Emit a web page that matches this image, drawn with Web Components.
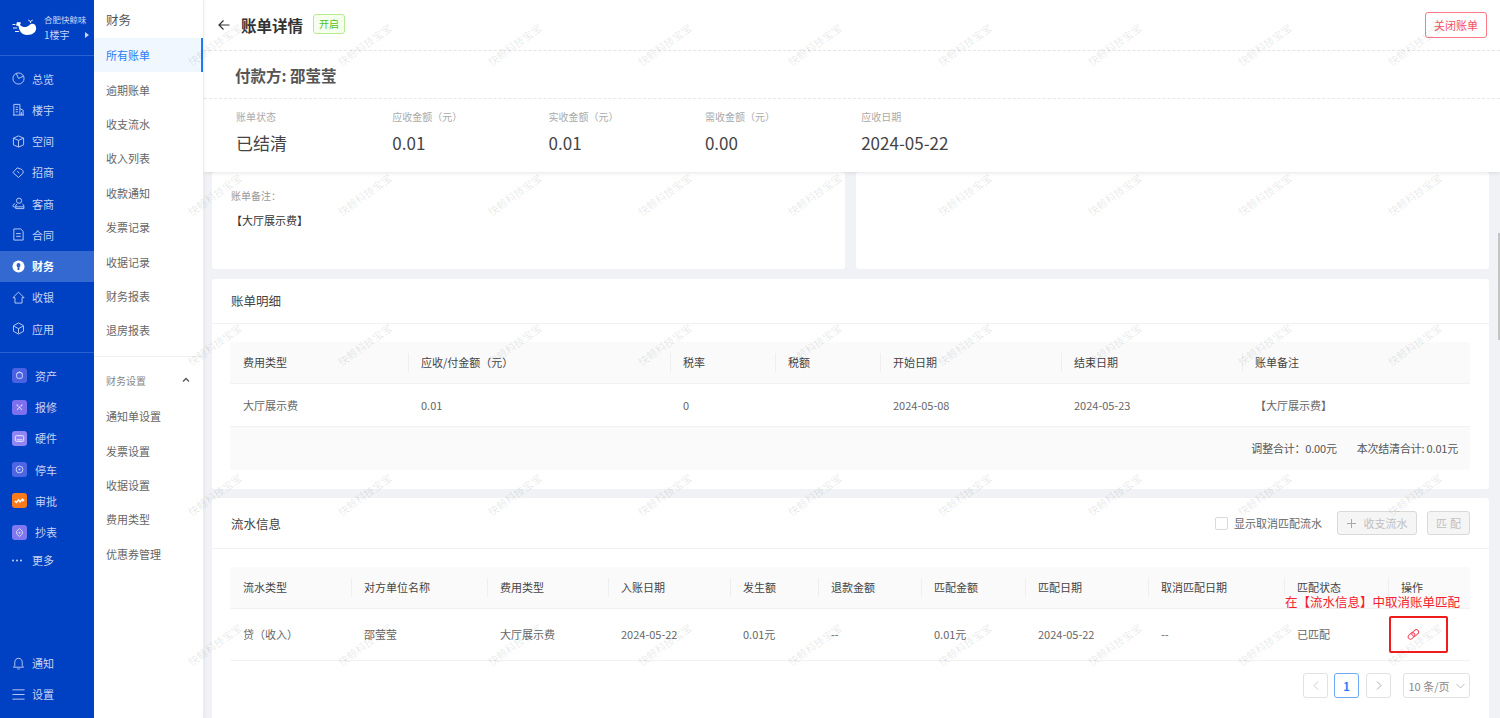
<!DOCTYPE html>
<html lang="zh">
<head>
<meta charset="utf-8">
<title>账单详情</title>
<style>
  html, body { margin: 0; height: 718px; overflow: hidden; }
  body {
    position: relative;
    font-family: "Noto Sans CJK SC", "Noto Sans", sans-serif;
    font-size: 11px;
    color: #666;
    background: #f0f2f5;
  }
  .shell { display: flex; height: 718px; }
  .main { flex: 1; min-width: 0; display: flex; flex-direction: column; overflow: hidden; }
  .content { display: flex; flex-direction: column; gap: 9.5px; padding: 0 11px 0 8px; }
  .two { display: flex; gap: 11px; }
  .two panel-card { flex: 1; height: 97px; }
  .note-label { font-size: 10px; color: #999; padding: 16px 0 0 19px; line-height: 16px; }
  .note-text { color: #333; padding: 8px 0 0 19px; line-height: 16px; }
  .bill-cols { --cols: 178px 262px 105px 105px 181px 181px 1fr; padding: 18px 19px 19px 18px; }
  .flow-cols { --cols: 121px 136px 121px 122px 88px 103px 104px 123px 136px 104px 1fr; padding: 18px 19px 0 18px; }
  .sum { display: flex; justify-content: flex-end; gap: 20px; align-items: center; height: 43px; padding-right: 12px; background: #fafafa; color: #555; letter-spacing: -.2px; }
</style>
</head>
<body>
<div class="shell">
  <side-rail>
    <rail-brand slot="brand"></rail-brand>
    <rail-item slot="top"><rail-icon name="pie"></rail-icon>总览</rail-item>
    <rail-item slot="top"><rail-icon name="building"></rail-icon>楼宇</rail-item>
    <rail-item slot="top"><rail-icon name="cube"></rail-icon>空间</rail-item>
    <rail-item slot="top"><rail-icon name="tag"></rail-icon>招商</rail-item>
    <rail-item slot="top"><rail-icon name="user"></rail-icon>客商</rail-item>
    <rail-item slot="top"><rail-icon name="doc"></rail-icon>合同</rail-item>
    <rail-item slot="top" active><rail-icon name="coin"></rail-icon>财务</rail-item>
    <rail-item slot="top"><rail-icon name="home"></rail-icon>收银</rail-item>
    <rail-item slot="top"><rail-icon name="hex"></rail-icon>应用</rail-item>
    <rail-item slot="apps" tile><rail-icon name="t-box" tile="#4a62e2"></rail-icon>资产</rail-item>
    <rail-item slot="apps" tile><rail-icon name="t-cross" tile="#7d70ee"></rail-icon>报修</rail-item>
    <rail-item slot="apps" tile><rail-icon name="t-card" tile="#8f86f3"></rail-icon>硬件</rail-item>
    <rail-item slot="apps" tile><rail-icon name="t-ring" tile="#4f66e4"></rail-icon>停车</rail-item>
    <rail-item slot="apps" tile><rail-icon name="t-wave" tile="#fb7a1c"></rail-icon>审批</rail-item>
    <rail-item slot="apps" tile><rail-icon name="t-drop" tile="#7f78ee"></rail-icon>抄表</rail-item>
    <rail-item slot="more" short><rail-icon name="dots"></rail-icon>更多</rail-item>
    <rail-item slot="bottom"><rail-icon name="bell"></rail-icon>通知</rail-item>
    <rail-item slot="bottom"><rail-icon name="menu"></rail-icon>设置</rail-item>
  </side-rail>

  <sub-nav>
    <span slot="title">财务</span>
    <sub-item slot="main" active>所有账单</sub-item>
    <sub-item slot="main">逾期账单</sub-item>
    <sub-item slot="main">收支流水</sub-item>
    <sub-item slot="main">收入列表</sub-item>
    <sub-item slot="main">收款通知</sub-item>
    <sub-item slot="main">发票记录</sub-item>
    <sub-item slot="main">收据记录</sub-item>
    <sub-item slot="main">财务报表</sub-item>
    <sub-item slot="main">退房报表</sub-item>
    <span slot="group">财务设置</span>
    <sub-item slot="settings">通知单设置</sub-item>
    <sub-item slot="settings">发票设置</sub-item>
    <sub-item slot="settings">收据设置</sub-item>
    <sub-item slot="settings">费用类型</sub-item>
    <sub-item slot="settings">优惠券管理</sub-item>
  </sub-nav>

  <div class="main">
    <bill-header>
      <span slot="title">账单详情</span>
      <span slot="tag">开启</span>
      <span slot="action">关闭账单</span>
      <span slot="payer">付款方: 邵莹莹</span>
      <stat-item slot="stats"><span slot="label">账单状态</span>已结清</stat-item>
      <stat-item slot="stats"><span slot="label">应收金额（元）</span>0.01</stat-item>
      <stat-item slot="stats"><span slot="label">实收金额（元）</span>0.01</stat-item>
      <stat-item slot="stats"><span slot="label">需收金额（元）</span>0.00</stat-item>
      <stat-item slot="stats"><span slot="label">应收日期</span>2024-05-22</stat-item>
    </bill-header>

    <div class="content">
      <div class="two">
        <panel-card>
          <div class="note-label">账单备注：</div>
          <div class="note-text">【大厅展示费】</div>
        </panel-card>
        <panel-card></panel-card>
      </div>

      <panel-card heading="账单明细">
        <div class="bill-cols">
          <table-row head>
            <row-cell head first>费用类型</row-cell><row-cell head>应收/付金额（元）</row-cell><row-cell head>税率</row-cell><row-cell head>税额</row-cell><row-cell head>开始日期</row-cell><row-cell head>结束日期</row-cell><row-cell head>账单备注</row-cell>
          </table-row>
          <table-row style="--row-h:41px;padding-top:1px">
            <row-cell>大厅展示费</row-cell><row-cell>0.01</row-cell><row-cell>0</row-cell><row-cell></row-cell><row-cell>2024-05-08</row-cell><row-cell>2024-05-23</row-cell><row-cell>【大厅展示费】</row-cell>
          </table-row>
          <div class="sum"><span>调整合计：0.00元</span><span>本次结清合计: 0.01元</span></div>
        </div>
      </panel-card>

      <panel-card heading="流水信息" tall>
        <flow-tools slot="tools"></flow-tools>
        <div class="flow-cols">
          <table-row head>
            <row-cell head first>流水类型</row-cell><row-cell head>对方单位名称</row-cell><row-cell head>费用类型</row-cell><row-cell head>入账日期</row-cell><row-cell head>发生额</row-cell><row-cell head>退款金额</row-cell><row-cell head>匹配金额</row-cell><row-cell head>匹配日期</row-cell><row-cell head>取消匹配日期</row-cell><row-cell head>匹配状态</row-cell><row-cell head>操作</row-cell>
          </table-row>
          <table-row style="--row-h:51px">
            <row-cell>贷（收入）</row-cell><row-cell>邵莹莹</row-cell><row-cell>大厅展示费</row-cell><row-cell>2024-05-22</row-cell><row-cell>0.01元</row-cell><row-cell>--</row-cell><row-cell>0.01元</row-cell><row-cell>2024-05-22</row-cell><row-cell>--</row-cell><row-cell>已匹配</row-cell>
            <row-cell><svg width="13" height="13" viewBox="0 0 13 13" fill="none" stroke="#f0445a" stroke-width="1" style="display:block;margin-left:6px"><rect x="0.8" y="5.6" width="7.4" height="4.6" rx="2.3" transform="rotate(-45 4.5 7.9)"/><rect x="4.6" y="2.6" width="7.4" height="4.6" rx="2.3" transform="rotate(-45 8.3 4.9)"/></svg></row-cell>
          </table-row>
          <pager-bar></pager-bar>
        </div>
      </panel-card>
    </div>
  </div>
</div>

<water-mark></water-mark>
<match-note>在【流水信息】中取消账单匹配</match-note>
<scroll-thumb></scroll-thumb>

<script>
  // small helper, every element here is just a template + open shadow root
  function defineEl(name, css, html) {
    const tpl = document.createElement("template");
    tpl.innerHTML = `<style>${css}</style>${html}`;
    customElements.define(name, class extends HTMLElement {
      constructor() {
        super();
        this.attachShadow({ mode: "open" }).appendChild(tpl.content.cloneNode(true));
      }
    });
  }

  const ICONS = {
    pie: '<circle cx="7" cy="7" r="6"/><path d="M7 7L12.4 4.4M7 7L4.6 1.5"/>',
    building: '<path d="M2 13V1.5h6.5V13M8.5 6l3.5 1.8V13M1 13h12M4 4.5h2.4M4 7h2.4M4 9.5h2.4M10.2 10v3"/>',
    cube: '<path d="M7 1l5.5 2.4v7.2L7 13l-5.5-2.4V3.4zM1.5 3.4L7 5.8l5.5-2.4M7 5.8V13"/>',
    tag: '<path d="M5.6 2L1 7l6 5.4 4.8-4.6M5.6 2l3.6 1.2M9.2 3.2c2.4.6 3.4 2.8 2.6 4.6M5.8 5.6l2 2.2"/>',
    user: '<circle cx="7.6" cy="4" r="2.8"/><path d="M3.4 7.2C2 7.6 1 8.4 1 9.6c0 .8.6 1.2 1.4 1.2h1M5.4 7.6c-1 .6-1.4 1.4-1.4 2.2v2.7h8.8V9.8c0-1-.6-1.8-1.6-2.2M4 10.6h8.8"/>',
    doc: '<path d="M2 1h7.4L12 3.6V13H2zM4.5 6h5M4.5 9h5"/>',
    home: '<path d="M7 1.2L1 7.2h2.2V13h7.6V7.2H13z"/>',
    hex: '<path d="M7 1l5.4 3v6L7 13l-5.4-3V4zM2.4 4.6L7 7.2l4.6-2.6M7 7.2V12"/>',
    bell: '<path d="M7 1.4c-2.6 0-4 2-4 4.4v3.4L1.6 11h10.8L11 9.2V5.8c0-2.4-1.4-4.4-4-4.4zM5.6 12.6c.8.6 2 .6 2.8 0"/>',
    menu: '<path d="M.5 2h13M.5 7h13M.5 12h13"/>',
  };
  const TILES = {
    "t-box": '<rect x="5" y="5" width="6" height="6" rx="1.5" fill="none" stroke="#cfd6fa"/><path d="M5 6l3-2 3 2" fill="none" stroke="#cfd6fa"/>',
    "t-cross": '<path d="M5 5l6 6M11 5l-6 6" stroke="#e2defc" stroke-width="1.2" stroke-dasharray="2 .8"/>',
    "t-card": '<rect x="3.5" y="5" width="9" height="6" rx="1" fill="none" stroke="#f0eefe"/><path d="M5 9.4h6" stroke="#f0eefe"/>',
    "t-ring": '<circle cx="8" cy="8" r="3.6" fill="none" stroke="#cfd6fa"/><circle cx="8" cy="8" r="1.1" fill="#cfd6fa"/>',
    "t-wave": '<path d="M3 8.5l1.6 1.6L7 7.4l1.6 2L11 6.8l.6 1.4L13 6.8" fill="none" stroke="#fff" stroke-width="1.5"/>',
    "t-drop": '<path d="M8 3.8L11 6.6v3L8 12.2 5 9.6v-3z" fill="none" stroke="#dcd9fb"/><circle cx="8" cy="8.2" r="1" fill="#dcd9fb"/>',
  };

  class RailIcon extends HTMLElement {
    constructor() {
      super();
      this.attachShadow({ mode: "open" });
    }
    connectedCallback() {
      const name = this.getAttribute("name");
      const tile = this.getAttribute("tile");
      let svg;
      if (tile) {
        svg = `<svg width="15" height="15" viewBox="0 0 16 16" style="background:${tile};border-radius:3px">${TILES[name]}</svg>`;
      } else if (name === "coin") {
        svg = `<svg width="13" height="13" viewBox="0 0 14 14"><circle cx="7" cy="7" r="6.5" fill="#fff"/><rect x="5" y="3.2" width="4" height="4.6" rx="2" fill="#2f62cc"/><rect x="6" y="7.6" width="2" height="3.2" fill="#2f62cc"/></svg>`;
      } else if (name === "dots") {
        svg = `<svg width="10" height="13" viewBox="0 0 10 13" fill="#c6d3f2"><circle cx="1" cy="6.5" r="1"/><circle cx="5" cy="6.5" r="1"/><circle cx="9" cy="6.5" r="1"/></svg>`;
      } else {
        svg = `<svg width="13" height="13" viewBox="0 0 14 14" fill="none" stroke="#c2cff0" stroke-width="1" stroke-linejoin="round">${ICONS[name]}</svg>`;
      }
      this.shadowRoot.innerHTML = `<style>:host{display:inline-flex;flex:none}svg{display:block}</style>${svg}`;
    }
  }
  customElements.define("rail-icon", RailIcon);

  defineEl("side-rail", `
    :host { display: flex; flex-direction: column; flex: none; width: 94px; height: 718px; background: #0041c4; position: relative; z-index: 3; }
    .brand { height: 55px; border-bottom: 1px solid #2a60cf; }
    .top { padding-top: 7px; padding-bottom: 8px; border-bottom: 1px solid #2a60cf; }
    .apps { padding-top: 7px; }
    .bottom { margin-top: auto; padding-bottom: 8px; }
  `, `
    <div class="brand"><slot name="brand"></slot></div>
    <div class="top"><slot name="top"></slot></div>
    <div class="apps"><slot name="apps"></slot><slot name="more"></slot></div>
    <div class="bottom"><slot name="bottom"></slot></div>
  `);

  defineEl("rail-brand", `
    :host { display: flex; align-items: center; height: 100%; padding-left: 12px; gap: 7px; color: #c8d5f5; font-size: 10px; }
    .names { display: flex; flex-direction: column; gap: 2px; line-height: 13px; margin-top: -1px; }
    .first { font-size: 8.5px; }
    .second { display: flex; justify-content: space-between; align-items: center; width: 45px; }
    i { width: 0; height: 0; border-left: 4px solid #c8d5f5; border-top: 3.5px solid transparent; border-bottom: 3.5px solid transparent; }
    svg { display: block; }
  `, `
    <svg width="25" height="17" viewBox="0 0 25 17" fill="#fff">
      <path d="M5 3l4 .6L8 6c3 3 7 2.4 9.2 .2C19.4 4 23.2 4 24 8c.9 4.800-3 8-9 8-5 0-8-4-8.500-9L4 6.500z"/>
      <path d="M18.500 3.600c0-1.300-1-2.300-2.200-2.400M18.500 3.600c0-1.300 1-2.300 2.200-2.400" fill="none" stroke="#fff"/>
      <path d="M.5 5.500h3M1 9h4.200M3 12.500h4" stroke="#fff" stroke-width=".9"/>
    </svg>
    <div class="names"><span class="first">合肥快鲸味</span><span class="second"><span>1楼宇</span><i></i></span></div>
  `);

  defineEl("rail-item", `
    :host { display: flex; align-items: center; gap: 7px; height: 31.25px; padding-left: 12px; color: #c6d3f2; font-size: 11px; }
    :host([tile]) { gap: 8px; }
    :host([short]) { height: 25px; gap: 10px; }
    :host([active]) { background: #3369d0; color: #fff; font-weight: 700; }
  `, `<slot></slot>`);

  defineEl("sub-nav", `
    :host { display: block; flex: none; box-sizing: border-box; width: 110px; height: 718px; background: #fff; position: relative; z-index: 2; border-right: 1px solid #ececf0; box-shadow: 1px 0 3px rgba(0,0,0,.04); color: #666; font-size: 11px; }
    .title { height: 38px; line-height: 39px; padding-left: 12px; font-size: 12.5px; color: #555; }
    .main { padding-bottom: 8.5px; border-bottom: 1px solid #f0f0f0; }
    .group { display: flex; justify-content: space-between; align-items: center; box-sizing: border-box; height: 48px; padding: 0 13px 2px 12px; font-size: 10px; color: #888; }
    svg { display: block; }
    .settings { margin-top: -6px; }
  `, `
    <div class="title"><slot name="title"></slot></div>
    <div class="main"><slot name="main"></slot></div>
    <div class="group"><slot name="group"></slot>
      <svg width="8" height="6" viewBox="0 0 8 6" fill="none" stroke="#555" stroke-width="1.3"><path d="M1 4.5l3-3 3 3"/></svg></div>
    <div class="settings"><slot name="settings"></slot></div>
  `);

  defineEl("sub-item", `
    :host { display: flex; align-items: center; box-sizing: border-box; height: 34.4px; padding-left: 12px; }
    :host([active]) { background: #f0f7ff; color: #2b7cf6; border-right: 2px solid #1e7bf0; }
  `, `<slot></slot>`);

  defineEl("bill-header", `
    :host { display: block; flex: none; height: 172px; box-sizing: border-box; background: #fff; position: relative; z-index: 1; box-shadow: 0 1px 4px rgba(0,0,0,.1); }
    .bar { display: flex; align-items: center; height: 51px; box-sizing: border-box; padding: 0 13px 0 14px; border-bottom: 1px dashed #e4e4e4; }
    .title { margin-left: 11px; font-size: 15.5px; font-weight: 700; color: #333; }
    .tag { margin-left: 10px; margin-top: -3px; padding: 0 5px; height: 18px; line-height: 18px; border: 1px solid #b7eb8f; border-radius: 3px; background: #f6ffed; color: #52c41a; font-size: 10px; }
    .close { margin-left: auto; margin-top: -1px; width: 60px; height: 24px; line-height: 24px; text-align: center; border: 1px solid #ff7a85; border-radius: 3px; color: #f5505c; font-size: 11px; }
    .payer { height: 48px; line-height: 48px; box-sizing: border-box; padding-left: 31px; font-size: 15.5px; font-weight: 700; color: #555; border-bottom: 1px dashed #e8e8e8; }
    .stats { display: flex; padding: 11px 0 0 32px; }
    svg { display: block; }
  `, `
    <div class="bar">
      <svg width="12" height="12" viewBox="0 0 12 12" fill="none" stroke="#333" stroke-width="1.2"><path d="M11.500 6H1M5.500 1.500L1 6l4.500 4.500"/></svg>
      <span class="title"><slot name="title"></slot></span>
      <span class="tag"><slot name="tag"></slot></span>
      <span class="close"><slot name="action"></slot></span>
    </div>
    <div class="payer"><slot name="payer"></slot></div>
    <div class="stats"><slot name="stats"></slot></div>
  `);

  defineEl("stat-item", `
    :host { display: block; width: 156.3px; color: #444; font-size: 17px; line-height: 24px; }
    .label { display: block; font-size: 10px; line-height: 14px; color: #aaa; margin-bottom: 7px; }
  `, `<span class="label"><slot name="label"></slot></span><slot></slot>`);

  class PanelCard extends HTMLElement {
    constructor() {
      super();
      this.attachShadow({ mode: "open" });
    }
    connectedCallback() {
      const heading = this.getAttribute("heading");
      const tall = this.hasAttribute("tall");
      const head = heading
        ? `<div class="head" style="height:${tall ? 51 : 45}px"><span>${heading}</span><slot name="tools"></slot></div>`
        : "";
      this.shadowRoot.innerHTML = `
        <style>
          :host { display: block; background: #fff; border-radius: 3px; ${tall ? "min-height: 240px;" : ""} }
          .head { display: flex; align-items: center; justify-content: space-between; box-sizing: border-box; padding: 0 19px; border-bottom: 1px solid #f2f2f2; font-size: 12.5px; color: #444; }
        </style>
        ${head}<slot></slot>`;
    }
  }
  customElements.define("panel-card", PanelCard);

  defineEl("table-row", `
    :host { display: grid; grid-template-columns: var(--cols); height: var(--row-h, 42px); border-bottom: 1px solid #f2f2f2; color: #666; }
    :host([head]) { background: #fafafa; border-radius: 3px 3px 0 0; --row-h: 41px; color: #444; }
  `, `<slot></slot>`);

  defineEl("row-cell", `
    :host { display: flex; align-items: center; padding-left: 13px; position: relative; white-space: nowrap; font-size: 11px; line-height: 13px; }
    :host([head]:not([first]))::before { content: ""; position: absolute; left: 0; top: 11px; height: 19px; width: 1px; background: #efefef; }
  `, `<slot></slot>`);

  defineEl("flow-tools", `
    :host { display: flex; align-items: center; font-size: 11px; color: #666; }
    .check { width: 11px; height: 11px; border: 1px solid #d9d9d9; border-radius: 2px; margin-right: 6px; margin-top: 1px; }
    .btn { display: flex; align-items: center; justify-content: center; height: 24px; box-sizing: border-box; border: 1px solid #d9d9d9; border-radius: 3px; background: #f5f5f5; color: #bfbfbf; }
    .add { width: 80px; margin-left: 15px; gap: 8px; }
    .match { width: 43px; margin-left: 10px; letter-spacing: 3px; padding-left: 3px; }
    svg { display: block; }
  `, `
    <span class="check"></span><span>显示取消匹配流水</span>
    <span class="btn add"><svg width="9" height="9" viewBox="0 0 9 9" stroke="#a8a8a8"><path d="M4.500 0v9M0 4.500h9"/></svg>收支流水</span>
    <span class="btn match">匹配</span>
  `);

  defineEl("pager-bar", `
    :host { display: flex; justify-content: flex-end; align-items: center; gap: 6px; padding-top: 12px; font-size: 11px; color: #888; }
    .box { display: flex; align-items: center; justify-content: center; box-sizing: border-box; width: 25px; height: 25px; border: 1px solid #e2e2e2; border-radius: 3px; }
    .cur { border-color: #6ea8f8; color: #2b7cf6; font-weight: 700; }
    .next { margin-left: 1px; }
    .size { width: 67px; margin-left: 6px; gap: 6px; color: #888; }
    svg { display: block; }
  `, `
    <span class="box"><svg width="6" height="9" viewBox="0 0 6 9" fill="none" stroke="#ccc"><path d="M5 .5l-4 4 4 4"/></svg></span>
    <span class="box cur">1</span>
    <span class="box next"><svg width="6" height="9" viewBox="0 0 6 9" fill="none" stroke="#aaa"><path d="M1 .5l4 4-4 4"/></svg></span>
    <span class="box size">10 条/页<svg width="9" height="6" viewBox="0 0 9 6" fill="none" stroke="#bbb"><path d="M.5 1l4 4 4-4"/></svg></span>
  `);

  // annotation drawn over the table, same as the red box in the screenshot
  defineEl("match-note", `
    :host { position: absolute; left: 1285px; top: 595px; z-index: 5; width: 176px; color: #f5222d; font-size: 12.5px; line-height: 13px; white-space: nowrap; }
    .box { position: absolute; left: 104px; top: 21px; width: 59px; height: 37px; box-sizing: border-box; border: 2px solid #ee1c1c; border-radius: 2px; }
  `, `<slot></slot><div class="box"></div>`);

  defineEl("scroll-thumb", `
    :host { position: absolute; left: 1498px; top: 233px; width: 2px; height: 107px; background: #c4c4c4; z-index: 5; }
  `, ``);

  class WaterMark extends HTMLElement {
    constructor() {
      super();
      this.attachShadow({ mode: "open" });
    }
    connectedCallback() {
      const marks = "<span>快鲸科技宝宝</span>".repeat(9 * 5);
      this.shadowRoot.innerHTML = `
        <style>
          :host { position: absolute; left: 139px; top: -31px; z-index: 2; display: grid; grid-template-columns: repeat(9, 150px); grid-auto-rows: 150px; pointer-events: none; width: 1361px; overflow: hidden; }
          span { justify-self: center; align-self: center; transform: rotate(-36deg); font-size: 10.5px; color: rgba(0,0,0,.1); white-space: nowrap; }
        </style>${marks}`;
    }
  }
  customElements.define("water-mark", WaterMark);
</script>
</body>
</html>
